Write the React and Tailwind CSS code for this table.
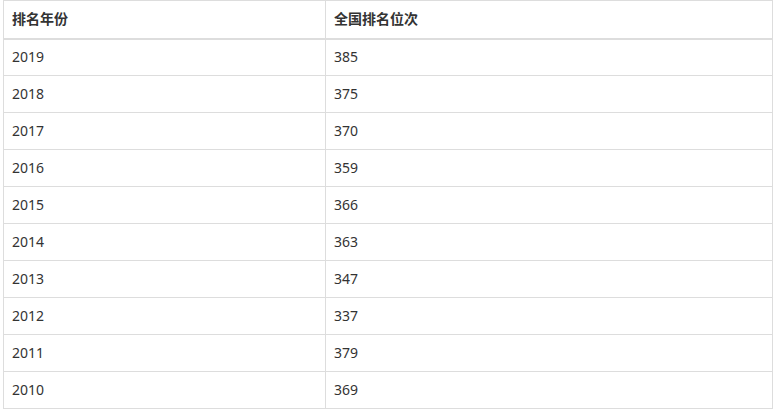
import React from 'react';

const rows = [
  ['2019', '385'],
  ['2018', '375'],
  ['2017', '370'],
  ['2016', '359'],
  ['2015', '366'],
  ['2014', '363'],
  ['2013', '347'],
  ['2012', '337'],
  ['2011', '379'],
  ['2010', '369'],
];

export default function App() {
  return (
    <div
      className="bg-white pl-[3px] text-[14px] text-[#333]"
      style={{ fontFamily: '"Noto Sans", "Noto Sans CJK SC", sans-serif' }}
    >
      <table className="w-[770px] table-fixed border-collapse">
        <colgroup>
          <col className="w-[322px]" />
          <col />
        </colgroup>
        <thead>
          <tr className="h-[38px]">
            <th className="border border-[#ddd] border-b-2 px-2 text-left font-bold leading-none">排名年份</th>
            <th className="border border-[#ddd] border-b-2 px-2 text-left font-bold leading-none">全国排名位次</th>
          </tr>
        </thead>
        <tbody>
          {rows.map(([year, rank]) => (
            <tr key={year} className="h-[37px]">
              <td className="border border-[#ddd] px-2 leading-none">{year}</td>
              <td className="border border-[#ddd] px-2 leading-none">{rank}</td>
            </tr>
          ))}
        </tbody>
      </table>
    </div>
  );
}
